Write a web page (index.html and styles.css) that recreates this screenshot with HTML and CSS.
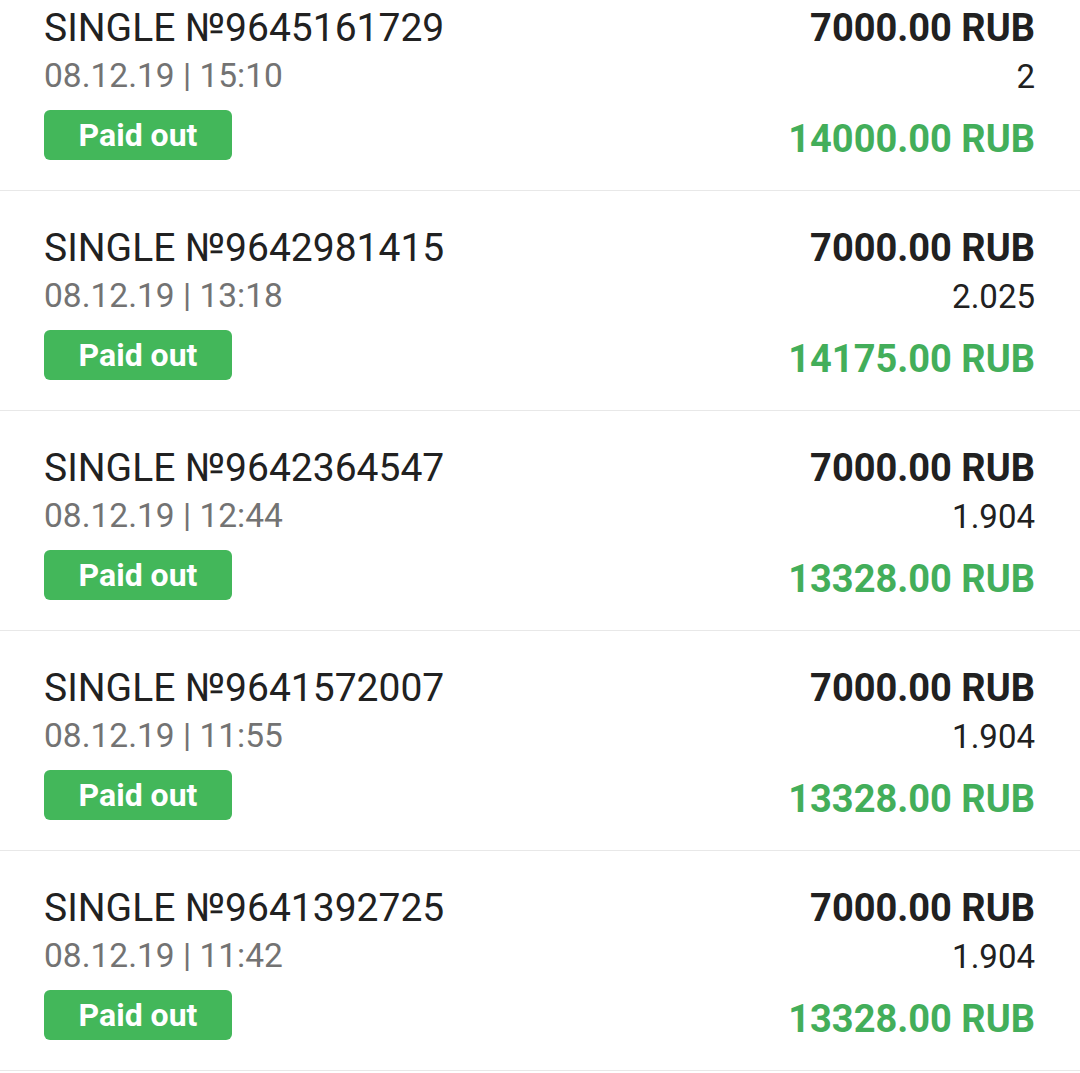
FILE: index.html
```html
<!DOCTYPE html>
<html lang="en">
<head>
<meta charset="utf-8">
<title>Bets</title>
<link rel="stylesheet" href="styles.css">
</head>
<body>
<ul class="bets">
  <li class="bet">
    <div class="bet-info">
      <div class="bet-title">SINGLE №9645161729</div>
      <div class="bet-date">08.12.19 | 15:10</div>
      <span class="badge">Paid out</span>
    </div>
    <div class="bet-sums">
      <div class="stake">7000.00 RUB</div>
      <div class="odds">2</div>
      <div class="payout">14000.00 RUB</div>
    </div>
  </li>
  <li class="bet">
    <div class="bet-info">
      <div class="bet-title">SINGLE №9642981415</div>
      <div class="bet-date">08.12.19 | 13:18</div>
      <span class="badge">Paid out</span>
    </div>
    <div class="bet-sums">
      <div class="stake">7000.00 RUB</div>
      <div class="odds">2.025</div>
      <div class="payout">14175.00 RUB</div>
    </div>
  </li>
  <li class="bet">
    <div class="bet-info">
      <div class="bet-title">SINGLE №9642364547</div>
      <div class="bet-date">08.12.19 | 12:44</div>
      <span class="badge">Paid out</span>
    </div>
    <div class="bet-sums">
      <div class="stake">7000.00 RUB</div>
      <div class="odds">1.904</div>
      <div class="payout">13328.00 RUB</div>
    </div>
  </li>
  <li class="bet">
    <div class="bet-info">
      <div class="bet-title">SINGLE №9641572007</div>
      <div class="bet-date">08.12.19 | 11:55</div>
      <span class="badge">Paid out</span>
    </div>
    <div class="bet-sums">
      <div class="stake">7000.00 RUB</div>
      <div class="odds">1.904</div>
      <div class="payout">13328.00 RUB</div>
    </div>
  </li>
  <li class="bet">
    <div class="bet-info">
      <div class="bet-title">SINGLE №9641392725</div>
      <div class="bet-date">08.12.19 | 11:42</div>
      <span class="badge">Paid out</span>
    </div>
    <div class="bet-sums">
      <div class="stake">7000.00 RUB</div>
      <div class="odds">1.904</div>
      <div class="payout">13328.00 RUB</div>
    </div>
  </li>
</ul>
</body>
</html>
```

FILE: styles.css
```css
html, body {
  margin: 0;
  padding: 0;
  background: #ffffff;
  font-family: Roboto, "Noto Sans", Arial, sans-serif;
  overflow: hidden;
}

.bets {
  list-style: none;
  margin: -29px 0 0 0;
  padding: 0;
}

.bet {
  box-sizing: border-box;
  height: 220px;
  display: flex;
  justify-content: space-between;
  align-items: flex-start;
  padding: 35px 45px 0 44px;
  border-bottom: 1px solid #e8e8e8;
  overflow: hidden;
}

.bet-info {
  display: flex;
  flex-direction: column;
  align-items: flex-start;
}

.bet-title {
  height: 44px;
  font-size: 39px;
  line-height: 44px;
  color: #212121;
  white-space: nowrap;
}

.bet-date {
  height: 40px;
  margin-top: 6px;
  font-size: 33.5px;
  line-height: 40px;
  color: #737373;
  white-space: nowrap;
}

.badge {
  box-sizing: border-box;
  margin-top: 14px;
  height: 50px;
  width: 188px;
  display: flex;
  align-items: center;
  justify-content: center;
  background: #43b75a;
  border-radius: 6px;
  color: #ffffff;
  font-size: 32px;
  line-height: 1;
  font-weight: 700;
}

.bet-sums {
  display: flex;
  flex-direction: column;
  align-items: flex-end;
  padding-top: 0;
}

.stake {
  height: 44px;
  font-size: 38px;
  line-height: 44px;
  font-weight: 700;
  color: #212121;
}

.odds {
  height: 40px;
  margin-top: 7px;
  font-size: 33px;
  line-height: 40px;
  color: #212121;
}

.payout {
  height: 44px;
  margin-top: 20px;
  font-size: 38px;
  line-height: 44px;
  font-weight: 700;
  color: #43ae5a;
}
```
